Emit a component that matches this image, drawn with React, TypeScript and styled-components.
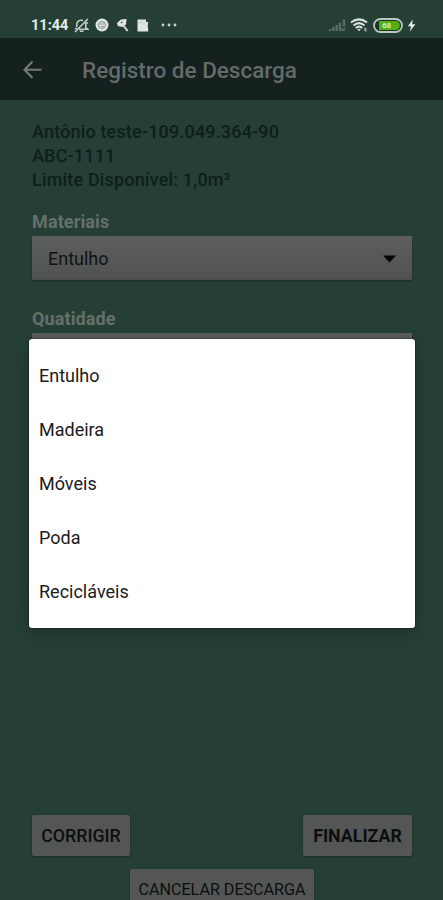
import React from "react";
import styled, { createGlobalStyle } from "styled-components";

const GlobalStyle = createGlobalStyle`
  * { box-sizing: border-box; }
  body { margin: 0; background: #253f37; font-family: Roboto, "Liberation Sans", sans-serif; }
`;

const Screen = styled.div`
  position: relative;
  display: flex;
  flex-direction: column;
  width: 443px;
  height: 900px;
  overflow: hidden;
  background: #253f37;
`;

const StatusBar = styled.div`
  display: flex;
  justify-content: space-between;
  height: 38px;
  padding: 12px 27px 0 31px;
`;

const StatusGroup = styled.div<{ $gap: number }>`
  display: flex;
  align-items: center;
  gap: ${(p) => p.$gap}px;
  height: 26px;
`;

const Clock = styled.span`
  width: 36px;
  padding-top: 1px;
  font-size: 14.5px;
  font-weight: 700;
  line-height: 25px;
  white-space: nowrap;
  color: #e4eae7;
`;

const AppBar = styled.header`
  display: flex;
  align-items: center;
  gap: 39px;
  height: 62px;
  padding: 1px 22px 0;
  background: #14211e;
`;

const Title = styled.h1`
  margin: 0;
  padding-top: 1px;
  font-size: 22.5px;
  font-weight: 500;
  line-height: 28px;
  white-space: nowrap;
  color: #656b69;
`;

const Content = styled.main`
  display: flex;
  flex: 1;
  flex-direction: column;
  padding: 20px 31px 0 32px;
`;

const Summary = styled.div`
  font-size: 18px;
  font-weight: 500;
  line-height: 24px;
  color: #0e1e19;
`;

const Line = styled.div`
  letter-spacing: 0.17px;
  white-space: nowrap;
`;

const Label = styled.div<{ $top: number }>`
  margin-top: ${(p) => p.$top}px;
  height: 24px;
  font-size: 18px;
  font-weight: 700;
  line-height: 24px;
  letter-spacing: 0.12px;
  color: #65706b;
`;

const Select = styled.div`
  display: flex;
  align-items: center;
  justify-content: space-between;
  flex-shrink: 0;
  height: 44px;
  margin-top: 2px;
  padding: 3px 16px 0;
  background: linear-gradient(#5b5e5c, #515352);
  border-bottom: 1px solid #494e4b;
  box-shadow: 0 1px 2px rgba(0, 0, 0, 0.35);
  font-size: 18px;
  line-height: 24px;
  color: #111312;
`;

const Actions = styled.div`
  display: flex;
  justify-content: space-between;
  margin-top: auto;
`;

const Button = styled.button<{ $width: number; $weight?: number; $size?: number }>`
  width: ${(p) => p.$width}px;
  height: 41px;
  padding: 0;
  border: 0;
  border-radius: 2px;
  background: #545655;
  box-shadow: 0 1px 3px rgba(0, 0, 0, 0.35);
  font-family: inherit;
  font-size: ${(p) => p.$size ?? 17.8}px;
  font-weight: ${(p) => p.$weight ?? 500};
  white-space: nowrap;
  color: #0c0e0d;
`;

const CancelRow = styled.div`
  display: flex;
  flex-shrink: 0;
  height: 44px;
  padding: 13px 0 0 98px;
`;

const Menu = styled.ul`
  position: absolute;
  top: 339px;
  left: 29px;
  width: 386px;
  height: 289px;
  margin: 0;
  padding: 10px;
  list-style: none;
  border-radius: 3px;
  background: #fff;
  box-shadow: 0 0 2px rgba(0, 20, 12, 0.9), 0 6px 18px rgba(0, 0, 0, 0.22);
`;

const Option = styled.li`
  height: 54px;
  font-size: 18px;
  line-height: 54px;
  color: #1b1b1b;
`;

const options = ["Entulho", "Madeira", "Móveis", "Poda", "Recicláveis"];

const MutedBell = () => (
  <svg width="15" height="15" viewBox="0 0 15 15" fill="none" stroke="#c3cec9" strokeWidth="1.6">
    <path d="M2.8 9V6.2Q3.2 2.5 7 2.3H9M11.8 4.5V9.8L13.8 11.2H5M5.8 13.2H9.5M1 10.5H3M1 14L13.8 1M11.8 5H14" />
  </svg>
);

const TargetIcon = () => (
  <svg width="14" height="14" viewBox="0 0 14 14">
    <circle cx="7" cy="7" r="6.5" fill="#e0e6e3" />
    <circle cx="7" cy="7" r="3.5" fill="none" stroke="#7f9088" />
    <path d="M5 6h4M6 8.5h3" stroke="#87988f" />
  </svg>
);

const KeyIcon = () => (
  <svg width="13" height="15" viewBox="0 0 13 15">
    <path d="M1 5L5 1.6L10.5 1L10 6.5L6.4 9L1.8 8Z" fill="#e0e6e3" />
    <path d="M7 7L11.7 13" stroke="#d3dcd8" strokeWidth="2" />
    <path d="M4.8 5L6.5 3.8" stroke="#51665c" strokeWidth="1.3" />
  </svg>
);

const CardSvg = styled.svg`
  margin-left: 2px;
`;

const CardIcon = () => (
  <CardSvg width="12" height="13" viewBox="0 0 12 13">
    <path d="M.5 .5H9V3H11.2L10.7 7.5L11.2 10V12.5H.5Z" fill="#dfe5e2" />
    <path d="M1 3.8H8.5" stroke="#b0beb7" strokeWidth=".7" />
  </CardSvg>
);

const DotsSvg = styled.svg`
  margin-left: 5px;
`;

const Dots = () => (
  <DotsSvg width="16" height="4" viewBox="0 0 16 4" fill="#c8d2cd">
    <circle cx="2" cy="2" r="1.4" />
    <circle cx="8" cy="2" r="1.4" />
    <circle cx="14" cy="2" r="1.4" />
  </DotsSvg>
);

const SignalIcon = () => (
  <svg width="18" height="13" viewBox="0 0 18 13" stroke="#5a7067" strokeWidth="2.3">
    <path d="M2 12V10M5.3 12V8M8.6 12V6M11.9 12V3.5M16 7.5V.5" fill="none" />
    <path d="M13.5 9L17 12M17 9L13.5 12" strokeWidth="1.2" />
  </svg>
);

const WifiIcon = () => (
  <svg width="18" height="14" viewBox="0 0 18 14" fill="none" stroke="#dbe3df" strokeWidth="2">
    <path d="M1 4.5Q9-1.7 17 4.5M3.5 7.4Q9 2.8 14.5 7.4M5.8 10Q9 7.2 12.2 10" />
    <path d="M7.2 11.1H10.8L9 13.3Z" fill="#dbe3df" stroke="none" />
    <path d="M15.4 9.8V13.4" stroke="#9caea5" />
  </svg>
);

const BatteryIcon = () => (
  <svg width="30" height="15" viewBox="0 0 30 15">
    <rect x="1" y="1" width="28" height="13" rx="6.5" fill="#1c3423" stroke="#b9c9c0" strokeWidth="1.8" />
    <path d="M6 3H22.5Q26.8 3 26.8 7.5T22.5 12H6Z" fill="#55ae15" />
    <text x="13.5" y="10.4" textAnchor="middle" fontFamily="Roboto" fontSize="8" fontWeight="700" fill="#d7efbd">68</text>
  </svg>
);

const BoltIcon = () => (
  <svg width="9" height="13" viewBox="0 0 9 13">
    <path d="M5.8 .5L.8 7.2H4L2.8 12.5L8.4 5.2H5.2Z" fill="#e4ebe7" />
  </svg>
);

const BackArrow = () => (
  <svg width="21" height="20" viewBox="0 0 21 20" fill="none" stroke="#737a77" strokeWidth="2.1">
    <path d="M10.5 1.5L2.5 9.7L10.5 18M2.5 9.7H19.5" />
  </svg>
);

const Caret = () => (
  <svg width="13" height="8" viewBox="0 0 13 8">
    <path d="M0 .5H13L6.5 7.5Z" fill="#050706" />
  </svg>
);

export default function App() {
  return (
    <>
      <GlobalStyle />
      <Screen>
        <StatusBar>
          <StatusGroup $gap={6.5}>
            <Clock>11:44</Clock>
            <MutedBell />
            <TargetIcon />
            <KeyIcon />
            <CardIcon />
            <Dots />
          </StatusGroup>
          <StatusGroup $gap={4.5}>
            <SignalIcon />
            <WifiIcon />
            <BatteryIcon />
            <BoltIcon />
          </StatusGroup>
        </StatusBar>
        <AppBar>
          <BackArrow />
          <Title>Registro de Descarga</Title>
        </AppBar>
        <Content>
          <Summary>
            <Line>Antônio teste-109.049.364-90</Line>
            <Line>ABC-1111</Line>
            <Line>Limite Disponível: 1,0m³</Line>
          </Summary>
          <Label $top={18}>Materiais</Label>
          <Select>
            <span>Entulho</span>
            <Caret />
          </Select>
          <Label $top={27}>Quatidade</Label>
          <Select />
          <Actions>
            <Button $width={98}>CORRIGIR</Button>
            <Button $width={109} $weight={700}>FINALIZAR</Button>
          </Actions>
          <CancelRow>
            <Button $width={184} $weight={400} $size={16.1}>CANCELAR DESCARGA</Button>
          </CancelRow>
        </Content>
        <Menu>
          {options.map((name) => (
            <Option key={name}>{name}</Option>
          ))}
        </Menu>
      </Screen>
    </>
  );
}
